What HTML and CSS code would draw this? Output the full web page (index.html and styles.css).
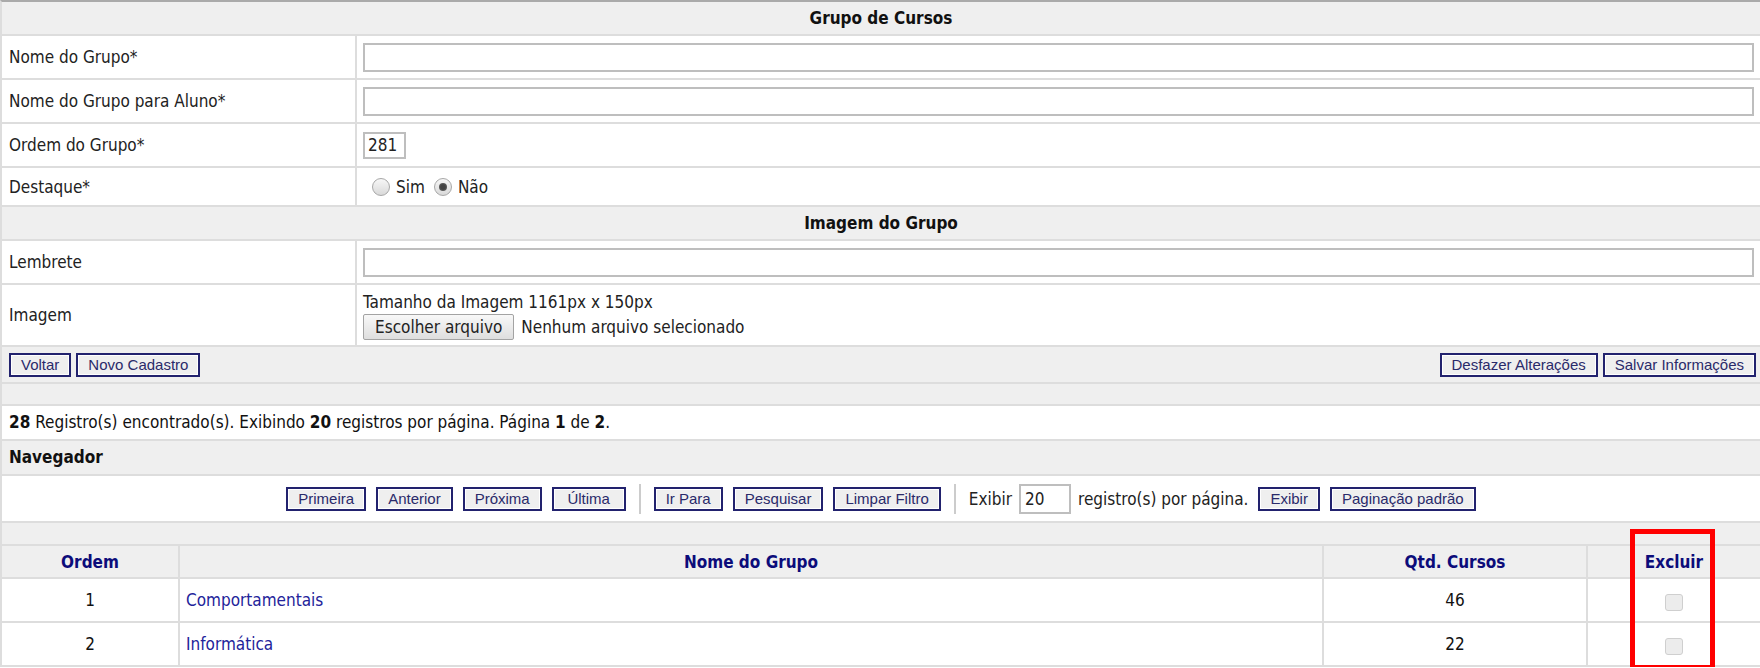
FILE: index.html
```html
<!DOCTYPE html>
<html lang="pt-BR">
<head>
    <meta charset="UTF-8">
    <title>Grupo de Cursos</title>
    <link rel="stylesheet" href="styles.css">
</head>
<body>

<div class="page">

    <!-- Cadastro do grupo -->
    <div class="bar title">Grupo de Cursos</div>
    <div class="field">
        <div class="label">Nome do Grupo*</div>
        <div class="value"><input type="text" class="text"></div>
    </div>
    <div class="field">
        <div class="label">Nome do Grupo para Aluno*</div>
        <div class="value"><input type="text" class="text"></div>
    </div>
    <div class="field">
        <div class="label">Ordem do Grupo*</div>
        <div class="value"><input type="text" class="text ordem" value="281"></div>
    </div>
    <div class="field short">
        <div class="label">Destaque*</div>
        <div class="value radios">
            <span class="radio"></span><span>Sim</span>
            <span class="radio checked"></span><span>Não</span>
        </div>
    </div>

    <div class="bar title">Imagem do Grupo</div>
    <div class="field">
        <div class="label">Lembrete</div>
        <div class="value"><input type="text" class="text"></div>
    </div>
    <div class="field tall">
        <div class="label">Imagem</div>
        <div class="value upload">
            <div>Tamanho da Imagem 1161px x 150px</div>
            <div class="file">
                <span class="file-btn">Escolher arquivo</span>
                <span>Nenhum arquivo selecionado</span>
            </div>
        </div>
    </div>

    <div class="bar actions">
        <div class="group">
            <button class="btn">Voltar</button>
            <button class="btn">Novo Cadastro</button>
        </div>
        <div class="group">
            <button class="btn">Desfazer Alterações</button>
            <button class="btn">Salvar Informações</button>
        </div>
    </div>
    <div class="bar spacer"></div>

    <!-- Listagem -->
    <div class="info"><b>28</b> Registro(s) encontrado(s). Exibindo <b>20</b> registros por página. Página <b>1</b> de <b>2</b>.</div>
    <div class="bar section">Navegador</div>
    <div class="nav">
        <button class="btn fixed">Primeira</button>
        <button class="btn fixed">Anterior</button>
        <button class="btn fixed">Próxima</button>
        <button class="btn fixed">Última</button>
        <span class="sep"></span>
        <button class="btn">Ir Para</button>
        <button class="btn">Pesquisar</button>
        <button class="btn">Limpar Filtro</button>
        <span class="sep"></span>
        <span>Exibir</span>
        <input type="text" class="text qtd" value="20">
        <span>registro(s) por página.</span>
        <button class="btn">Exibir</button>
        <button class="btn">Paginação padrão</button>
    </div>
    <div class="bar spacer low"></div>

    <table class="list">
        <thead>
            <tr>
                <th class="c-ordem">Ordem</th>
                <th class="c-nome">Nome do Grupo</th>
                <th class="c-qtd">Qtd. Cursos</th>
                <th class="c-excluir">Excluir</th>
            </tr>
        </thead>
        <tbody>
            <tr>
                <td class="center">1</td>
                <td><a href="#">Comportamentais</a></td>
                <td class="center">46</td>
                <td class="center"><span class="check"></span></td>
            </tr>
            <tr>
                <td class="center">2</td>
                <td><a href="#">Informática</a></td>
                <td class="center">22</td>
                <td class="center"><span class="check"></span></td>
            </tr>
        </tbody>
    </table>

    <div class="mark"></div>
</div>

</body>
</html>
```

FILE: styles.css
```css
html, body {
    margin: 0;
    padding: 0;
    overflow: hidden;
}

body {
    font-family: "DejaVu Sans Condensed", "DejaVu Sans", sans-serif;
    font-size: 17px;
    color: #222;
    background-color: #fff;
}

.page {
    position: relative;
    border-top: 2px solid #aaa;
    border-left: 2px solid #ddd;
}

.bar {
    box-sizing: border-box;
    background-color: #efefef;
    border-bottom: 2px solid #ddd;
}

.title {
    height: 34px;
    line-height: 32px;
    text-align: center;
    font-weight: bold;
    color: #111;
}

.section {
    height: 35px;
    line-height: 33px;
    padding-left: 7px;
    font-weight: bold;
    color: #111;
}

.spacer {
    height: 22px;
}

.spacer.low {
    height: 23px;
}

/* linhas do formulario */
.field {
    box-sizing: border-box;
    display: grid;
    grid-template-columns: 355px 1fr;
    height: 44px;
    border-bottom: 2px solid #ddd;
}

.field.short {
    height: 39px;
}

.field.tall {
    height: 62px;
}

.label {
    display: flex;
    align-items: center;
    padding-left: 7px;
    border-right: 2px solid #ddd;
}

.value {
    display: flex;
    align-items: center;
    padding: 0 6px;
}

.text {
    box-sizing: border-box;
    width: 100%;
    height: 29px;
    margin: 0;
    padding: 0 4px;
    border: 2px solid #bebebe;
    font-family: inherit;
    font-size: 17px;
    color: #222;
    background-color: #fff;
    outline: none;
}

.text.ordem {
    width: 43px;
    height: 27px;
    padding: 0 3px;
}

.radios {
    gap: 6px;
    padding-left: 15px;
}

.radios .radio + span {
    margin-right: 3px;
}

.radio {
    box-sizing: border-box;
    position: relative;
    width: 18px;
    height: 18px;
    border: 1px solid #a7a7a7;
    border-radius: 50%;
    background: linear-gradient(#f7f7f7, #d9d9d9);
}

.radio.checked::after {
    content: "";
    position: absolute;
    left: 4px;
    top: 4px;
    width: 8px;
    height: 8px;
    border-radius: 50%;
    background: radial-gradient(#444 40%, #777);
}

.upload {
    flex-direction: column;
    align-items: flex-start;
    justify-content: center;
    gap: 2px;
    padding-top: 2px;
}

.file {
    display: flex;
    align-items: center;
    gap: 7px;
}

.file-btn {
    box-sizing: border-box;
    height: 26px;
    line-height: 24px;
    padding: 0 11px;
    border: 1px solid #a3a3a3;
    border-radius: 2px;
    background: linear-gradient(#f8f8f8, #dedede);
}

/* botoes */
.btn {
    box-sizing: border-box;
    height: 24px;
    margin: 0;
    padding: 0 10px;
    font-family: "Liberation Sans", Arial, sans-serif;
    font-size: 15px;
    color: #2a2a6a;
    background-color: #efefef;
    border: 2px solid #22226e;
    box-shadow: inset 0 0 0 1px #fff;
    cursor: pointer;
}

.btn.fixed {
    min-width: 74px;
}

.actions {
    height: 37px;
    display: flex;
    align-items: center;
    justify-content: space-between;
    padding: 0 4px 0 7px;
}

.group {
    display: flex;
    gap: 5px;
}

.info {
    box-sizing: border-box;
    height: 35px;
    line-height: 33px;
    padding-left: 7px;
    color: #111;
    border-bottom: 2px solid #ddd;
}

.nav {
    box-sizing: border-box;
    height: 47px;
    display: flex;
    align-items: center;
    justify-content: center;
    gap: 10px;
    border-bottom: 2px solid #ddd;
}

.sep {
    width: 2px;
    height: 30px;
    margin: 0 3px;
    background-color: #ccc;
}

.text.qtd {
    width: 52px;
    height: 30px;
    margin: 0 -3px;
}

/* tabela de grupos */
.list {
    width: 100%;
    table-layout: fixed;
    border-collapse: separate;
    border-spacing: 0;
}

.list th,
.list td {
    box-sizing: border-box;
    border-right: 2px solid #ddd;
    border-bottom: 2px solid #ddd;
    padding: 0 6px;
}

.list th:last-child,
.list td:last-child {
    border-right: none;
}

.list th {
    height: 33px;
    background-color: #efefef;
    color: #0c0c7a;
    font-weight: bold;
    text-align: center;
}

.list td {
    height: 44px;
    color: #111;
}

.c-ordem { width: 178px; }
.c-nome { width: 1144px; }
.c-qtd { width: 264px; }

.center {
    text-align: center;
}

.list a {
    color: #23239a;
    text-decoration: none;
}

.check {
    display: inline-block;
    box-sizing: border-box;
    width: 18px;
    height: 17px;
    margin-top: 3px;
    vertical-align: middle;
    border: 1px solid #cfcfcf;
    border-radius: 3px;
    background-color: #ececec;
}

/* destaque em vermelho sobre a coluna Excluir */
.mark {
    position: absolute;
    left: 1628px;
    top: 527px;
    width: 85px;
    height: 141px;
    box-sizing: border-box;
    border: 5px solid #f00;
}
```
